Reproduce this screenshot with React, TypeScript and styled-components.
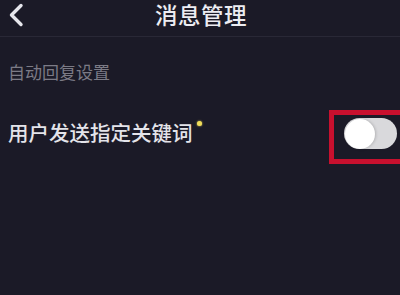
import React, { useState } from "react";
import styled, { createGlobalStyle } from "styled-components";

const Global = createGlobalStyle`
  html, body { margin: 0; padding: 0; background: #1b1a27; }
  body { font-family: "Noto Sans CJK SC", "Noto Sans", sans-serif; }
  #root { width: 400px; height: 295px; overflow: hidden; }
`;

const Page = styled.div`
  width: 400px;
  height: 295px;
  background: #1b1a27;
  overflow: hidden;
  display: flex;
  flex-direction: column;
`;

const Header = styled.header`
  height: 37px;
  flex: none;
  display: grid;
  grid-template-columns: 40px 1fr 40px;
  align-items: center;
  border-bottom: 1px solid #292836;
  box-sizing: border-box;
`;

const BackButton = styled.button`
  background: none;
  border: none;
  padding: 0 0 6px 8px;
  height: 100%;
  display: flex;
  align-items: center;
  color: #e6e6ec;
  cursor: pointer;
`;

const Title = styled.h1`
  margin: 0;
  text-align: center;
  font-size: 22.5px;
  font-weight: 500;
  color: #ececf2;
  line-height: 26px;
  padding: 0 0 8px 2px;
  letter-spacing: 0.5px;
  white-space: nowrap;
`;

const SectionTitle = styled.div`
  margin: 25px 0 0 8px;
  font-size: 17px;
  line-height: 20px;
  color: #7c7b86;
`;

const Row = styled.div`
  margin-top: 28px;
  display: flex;
  align-items: flex-start;
  justify-content: space-between;
  padding-left: 8px;
`;

const Label = styled.div`
  margin-top: 10px;
  font-size: 20.5px;
  line-height: 24px;
  color: #e4e4ea;
  font-weight: 500;
  position: relative;
  padding-right: 10px;
`;

const Dot = styled.span`
  position: absolute;
  right: 1px;
  top: 1px;
  width: 5px;
  height: 5px;
  border-radius: 50%;
  background: #f0dc5a;
  box-shadow: 0 0 2px #f0dc5a;
`;

const Highlight = styled.div`
  border: 5px solid #c8102e;
  padding: 3px 10px 10px 10px;
  margin-right: -12px;
  display: flex;
`;

const Track = styled.button<{ $on: boolean }>`
  width: 53px;
  height: 31px;
  border-radius: 16px;
  border: none;
  padding: 1px;
  background: ${(p) => (p.$on ? "#fe2c55" : "#d9d9dc")};
  display: flex;
  justify-content: ${(p) => (p.$on ? "flex-end" : "flex-start")};
  align-items: center;
  cursor: pointer;
`;

const Knob = styled.span`
  width: 30px;
  height: 30px;
  border-radius: 50%;
  background: #ffffff;
  box-shadow: 1px 0 3px rgba(0, 0, 0, 0.18);
`;

export default function App() {
  const [on, setOn] = useState(false);
  return (
    <Page>
      <Global />
      <Header>
        <BackButton aria-label="back">
          <svg width="16" height="24" viewBox="0 0 16 24" fill="none">
            <path d="M13 2.5 L3.5 12 L13 21.5" stroke="currentColor" strokeWidth="3.4" strokeLinecap="round" strokeLinejoin="round" />
          </svg>
        </BackButton>
        <Title>消息管理</Title>
        <span />
      </Header>
      <SectionTitle>自动回复设置</SectionTitle>
      <Row>
        <Label>
          用户发送指定关键词
          <Dot />
        </Label>
        <Highlight>
          <Track $on={on} onClick={() => setOn(!on)}>
            <Knob />
          </Track>
        </Highlight>
      </Row>
    </Page>
  );
}
